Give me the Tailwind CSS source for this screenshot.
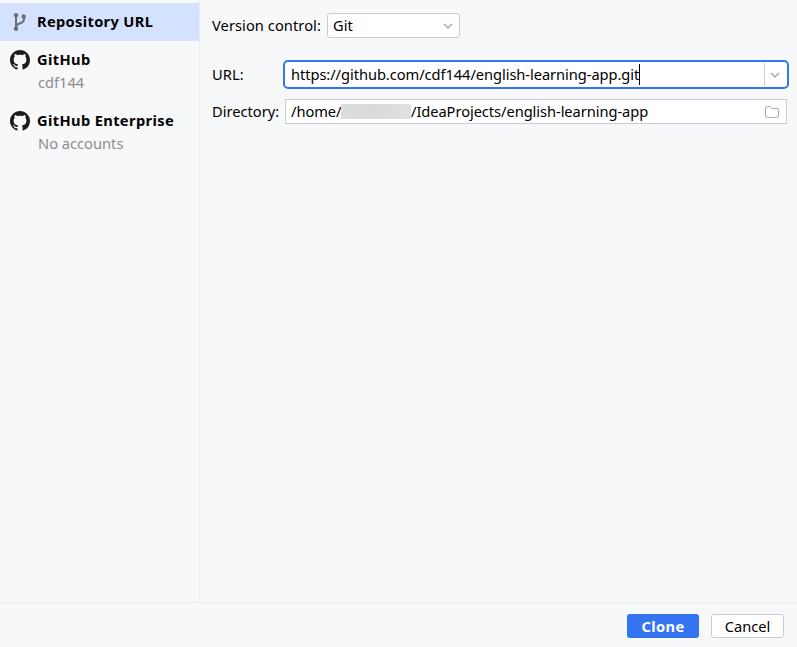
<!DOCTYPE html>
<html lang="en">
<head>
<meta charset="utf-8">
<title>Get from Version Control</title>
<script src="https://cdn.jsdelivr.net/npm/@tailwindcss/browser@4"></script>
</head>
<body class="bg-[#f7f8fa]">
<svg class="hidden">
  <symbol id="octocat" viewBox="0 0 16 16"><path fill="#1b1b1b" d="M8 0C3.58 0 0 3.58 0 8c0 3.54 2.29 6.53 5.47 7.59.4.07.55-.17.55-.38 0-.19-.01-.82-.01-1.49-2.01.37-2.53-.49-2.69-.94-.09-.23-.48-.94-.82-1.13-.28-.15-.68-.52-.01-.53.63-.01 1.08.58 1.23.82.72 1.21 1.87.87 2.33.66.07-.52.28-.87.51-1.07-1.78-.2-3.64-.89-3.64-3.95 0-.87.31-1.59.82-2.15-.08-.2-.36-1.02.08-2.12 0 0 .67-.21 2.2.82.64-.18 1.32-.27 2-.27s1.36.09 2 .27c1.53-1.04 2.2-.82 2.2-.82.44 1.1.16 1.92.08 2.12.51.56.82 1.27.82 2.15 0 3.07-1.87 3.75-3.65 3.95.29.25.54.73.54 1.48 0 1.07-.01 1.93-.01 2.2 0 .21.15.46.55.38A8.01 8.01 0 0 0 16 8c0-4.42-3.58-8-8-8z"/></symbol>
</svg>
<div class="flex h-[647px] w-[797px] flex-col overflow-hidden bg-[#f7f8fa] font-['Noto_Sans',sans-serif] text-[14.67px] leading-5 whitespace-nowrap text-black">
  <div class="flex h-[603px] border-b border-[#ebecf0]">
    <aside class="w-[200px] shrink-0 border-r border-[#ebecf0] pt-[3px]">
      <div class="flex h-[38px] items-center bg-[#d4e2ff] pl-[10px]">
        <svg class="h-5 w-5 shrink-0" viewBox="0 0 20 20" fill="none" stroke="#6e6e6e" stroke-width="2">
          <path d="M6 3v14M14 5v2c0 3-2 3.700-4 4.300-2 .6-3.500 1.200-3.500 3"/>
          <g fill="#6e6e6e" stroke="none"><circle cx="6" cy="3.200" r="2.200"/><circle cx="6" cy="16.800" r="2.200"/><circle cx="13.700" cy="4.500" r="2.200"/></g>
        </svg>
        <span class="ml-[7px] pb-[2px] font-bold tracking-[0.32px]">Repository URL</span>
      </div>
      <div class="flex h-[61px] items-start pt-[8px] pl-[10px]">
        <svg class="mt-px h-5 w-5 shrink-0"><use href="#octocat"/></svg>
        <div class="ml-[7px]"><div class="font-bold tracking-[0.36px]">GitHub</div><div class="mt-[3px] ml-px text-[#8c8c8c]">cdf144</div></div>
      </div>
      <div class="flex h-[61px] items-start pt-[8px] pl-[10px]">
        <svg class="mt-px h-5 w-5 shrink-0"><use href="#octocat"/></svg>
        <div class="ml-[7px]"><div class="font-bold tracking-[0.36px]">GitHub Enterprise</div><div class="mt-[3px] ml-px text-[#8c8c8c]">No accounts</div></div>
      </div>
    </aside>
    <main class="flex w-[597px] flex-col pt-[13px] pl-3">
      <div class="flex h-[25px] items-center">
        <span class="w-[115px] pb-[2px] tracking-[0.06px]">Version control:</span>
        <div class="flex h-[25px] w-[133px] items-center justify-between rounded-[3px] border border-[#c9ccd6] bg-white pr-[6px] pl-[5px]">
          <span class="pb-[2px]">Git</span>
          <svg class="h-2 w-[10px]" viewBox="0 0 10 8" fill="none" stroke="#9a9dab" stroke-width="1.100"><path d="M1 2l4 4 4-4"/></svg>
        </div>
      </div>
      <div class="mt-[22px] flex h-[29px] items-center">
        <span class="w-[71px] pb-[2px] tracking-[0.1px]">URL:</span>
        <div class="flex h-[29px] w-[506px] items-center rounded-[5px] border-2 border-[#3574f0] bg-white pl-[6px]">
          <span class="pb-[2px] tracking-[-0.062px]">https://github.com/cdf144/english-learning-app.git</span><span class="h-[21px] w-px bg-black"></span>
          <div class="ml-auto flex h-[23px] w-[23px] items-center border-l border-[#c9ccd6] pl-[5px]">
            <svg class="h-2 w-[10px]" viewBox="0 0 10 8" fill="none" stroke="#9a9dab" stroke-width="1.100"><path d="M1 2l4 4 4-4"/></svg>
          </div>
        </div>
      </div>
      <div class="mt-[10px] flex h-[25px] items-center">
        <span class="w-[73px] pb-[2px]">Directory:</span>
        <div class="flex h-[25px] w-[502px] items-center border border-[#c9ccd6] bg-white pr-[7px] pl-[5px]">
          <span class="w-[50px] pb-[2px] tracking-[-0.06px]">/home/</span><span class="h-[15px] w-[70px] bg-linear-to-r from-[#dcdddd] via-[#d9dadc] to-[#e0e1e2]"></span><span class="pb-[2px] tracking-[-0.06px]">/IdeaProjects/english-learning-app</span>
          <svg class="ml-auto h-3 w-[14px]" viewBox="0 0 14 12" fill="none" stroke="#a8adbd"><path d="M.5 10V2Q.5.500 2 .5h3l2 2h5q1.500 0 1.500 1.500v6q0 1.500-1.500 1.500H2Q.5 11.500.5 10z"/></svg>
        </div>
      </div>
    </main>
  </div>
  <footer class="flex h-11 justify-end gap-3 pt-[11px] pr-[13px]">
    <button class="h-6 w-[72px] rounded-[3px] bg-[#3574f0] font-bold tracking-[0.36px] text-white">Clone</button>
    <button class="h-6 w-[73px] rounded-[3px] border border-[#c9ccd6] bg-white leading-[22px]">Cancel</button>
  </footer>
</div>
</body>
</html>
